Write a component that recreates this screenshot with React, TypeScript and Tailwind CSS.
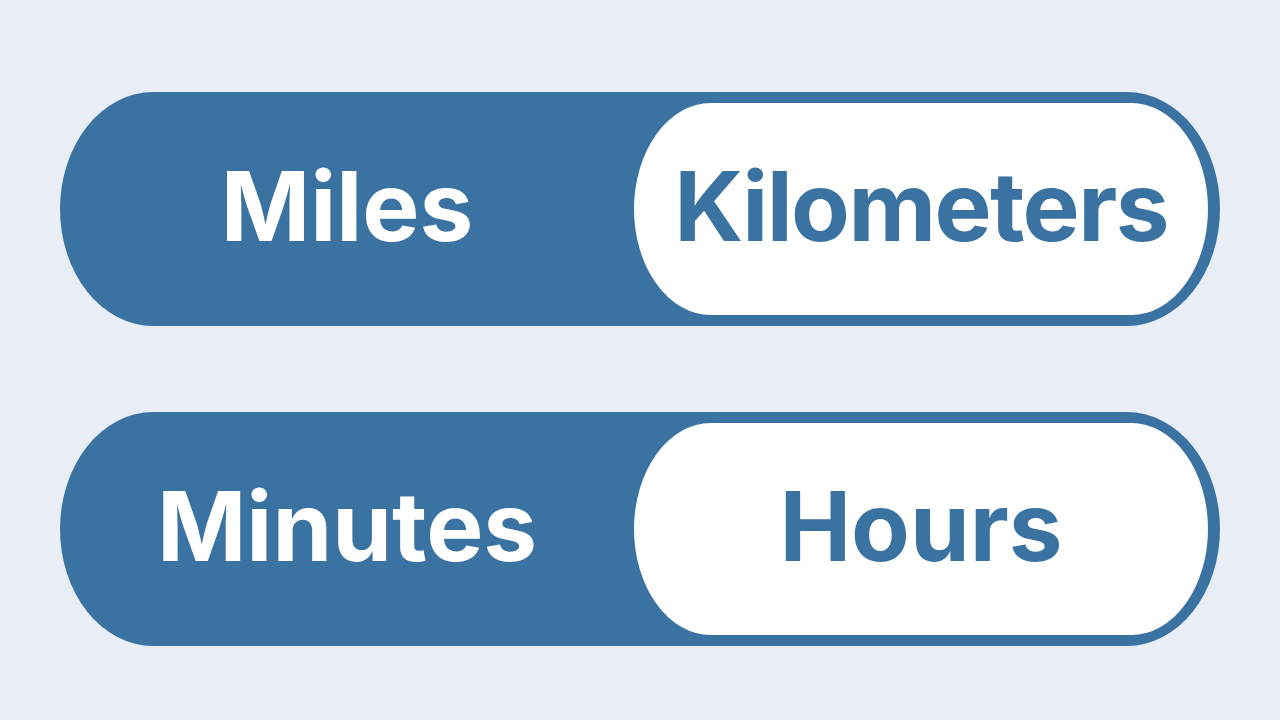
export default function App() {
  return (
    <div className="w-[1280px] h-[720px] bg-[#e9eef6] flex flex-col items-center pt-[92px] gap-[86px] font-['Inter',sans-serif]">
      <Toggle left="Miles" right="Kilometers" tight />
      <Toggle left="Minutes" right="Hours" />
    </div>
  )
}

function Toggle({ left, right, tight }: { left: string; right: string; tight?: boolean }) {
  return (
    <div className="w-[1160px] h-[234px] bg-[#3a72a2] rounded-[93px_/_117px] flex pt-[11px] pb-[11px] pr-[12px]">
      <div className="w-[574px] flex items-center justify-center pb-[6px] text-white font-bold text-[96px] leading-none">{left}</div>
      <div
        className={`w-[574px] bg-white rounded-[77px_/_106px] flex items-center justify-center pb-[6px] text-[#3a72a2] font-bold text-[96px] leading-none ${
          tight ? "tracking-[-1.6px]" : ""
        }`}
      >
        {right}
      </div>
    </div>
  )
}
